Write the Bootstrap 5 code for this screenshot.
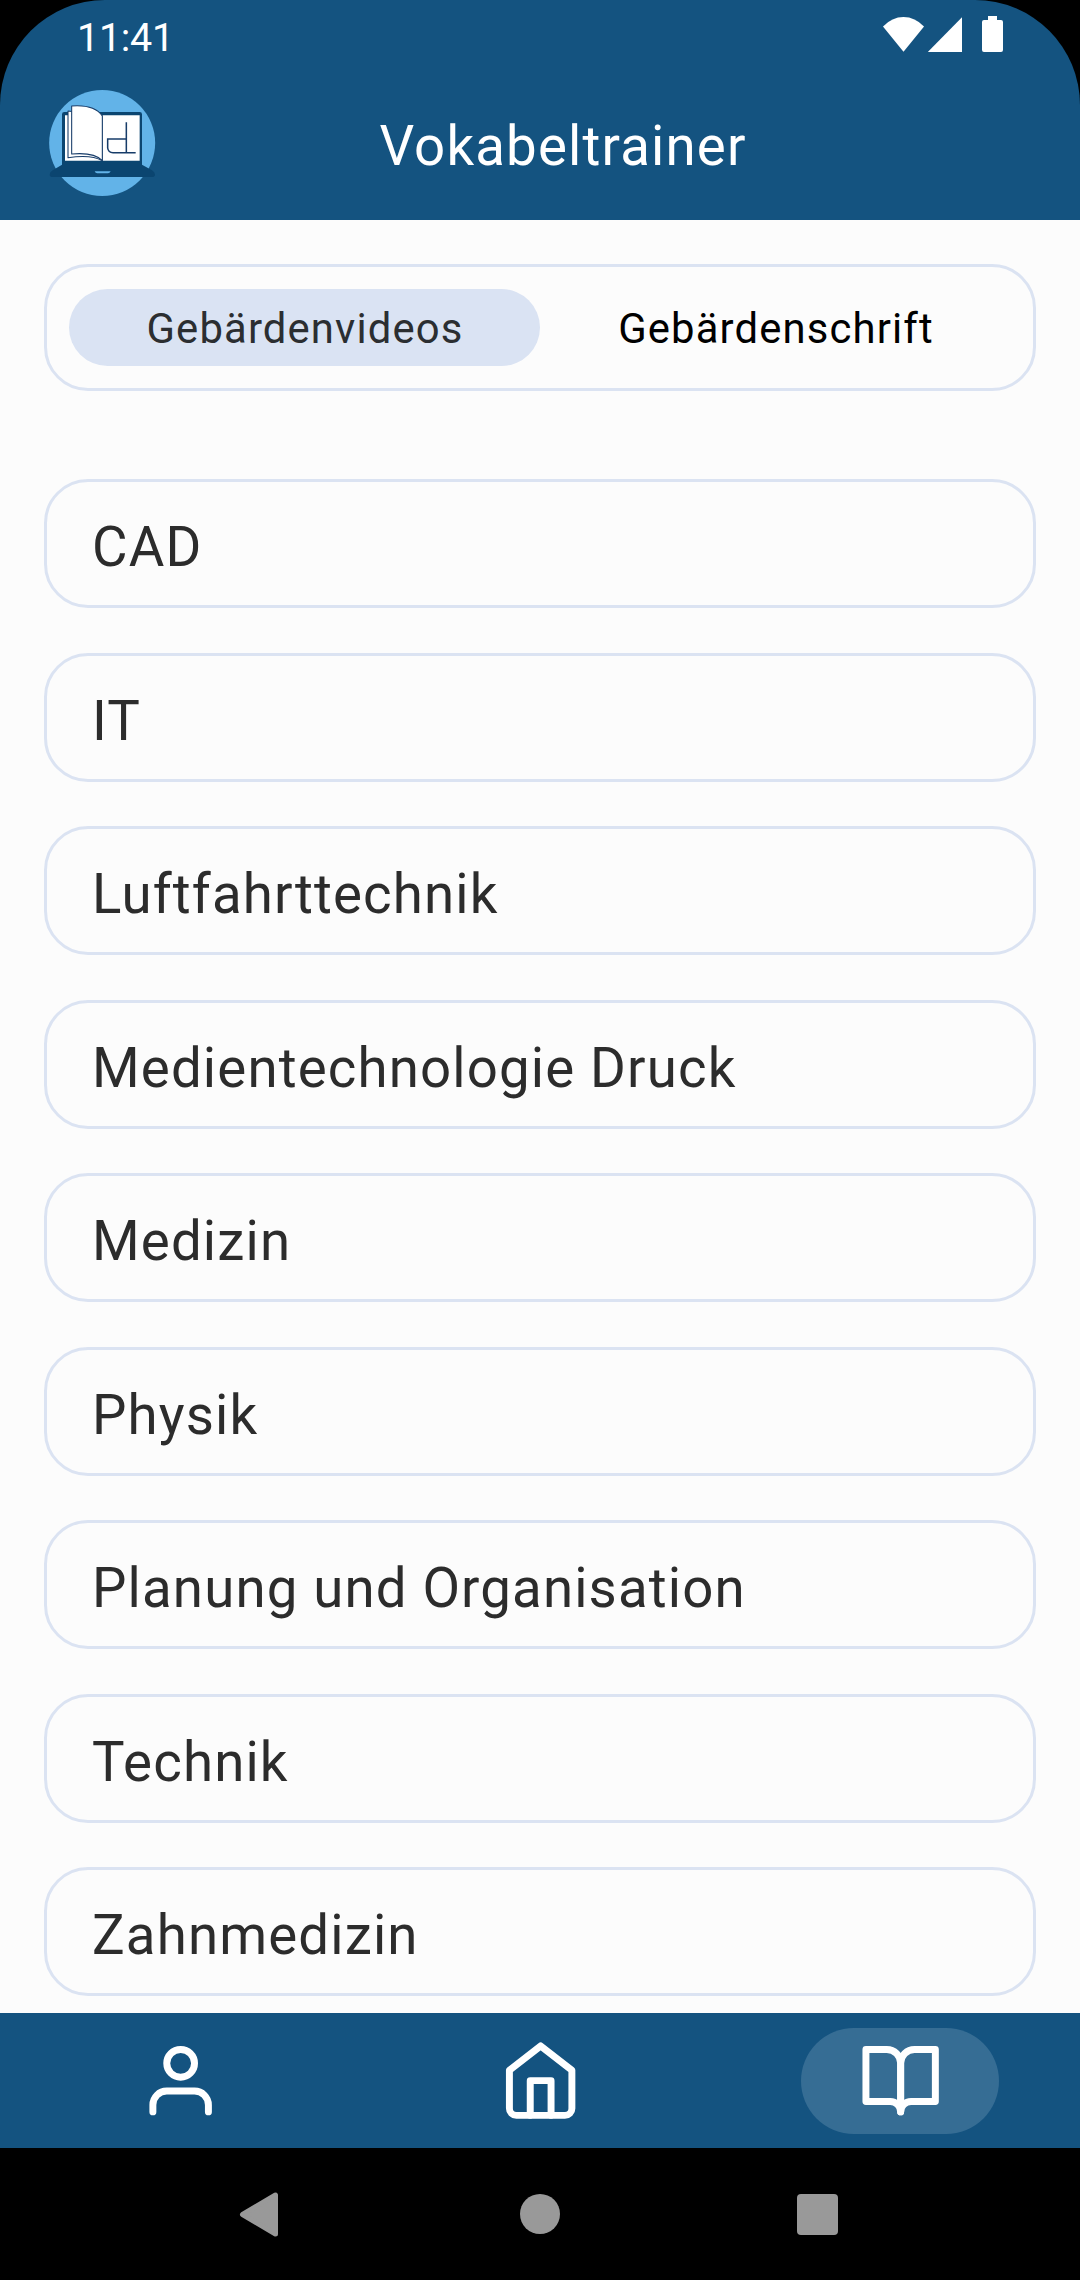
<!DOCTYPE html>
<html lang="de">
<head>
<meta charset="utf-8">
<meta name="viewport" content="width=device-width, initial-scale=1">
<title>Vokabeltrainer</title>
<link href="https://cdn.jsdelivr.net/npm/bootstrap@5.3.0/dist/css/bootstrap.min.css" rel="stylesheet">
<style>
  body { background: #000; font-family: Roboto, "Noto Sans", sans-serif; }
  .phone { width: 1080px; height: 2280px; }
  .app-head { height: 220px; background: #145380; border-radius: 105px 105px 0 0; }
  .status { height: 70px; padding: 0 77px 0 77px; }
  .clock { font-size: 39.5px; line-height: 47px; padding-top: 14px; letter-spacing: -.3px; }
  .status-icons { margin-top: 15px; }
  .app-bar { height: 150px; padding-left: 48px; }
  .logo { width: 108px; height: 108px; margin-top: 18.7px; }
  .app-title { font-size: 54.6px; letter-spacing: 1.17px; line-height: 64px; font-weight: 400; padding-top: 44px; margin-right: 110px; }
  .content { background: #fcfcfc; padding: 44px 44px 0; }
  .segment { height: 127px; padding: 22px; border: 3px solid #dbe3f2; border-radius: 44px; }
  .segment .nav-link { height: 77px; padding: 2px 0 0 1px; border-radius: 39px; color: #000; font-size: 41.8px; line-height: 76px; letter-spacing: 1.15px; }
  .segment .nav-link.active { background: #dae3f3; color: #2b2e31; }
  .topics { margin-top: 88px; gap: 44.5px; }
  .topics .list-group-item { height: 129px; border: 3px solid #dbe3f2; border-radius: 44px; background: transparent; color: #2c2c2c; padding: 32px 45px 0; font-size: 54.6px; line-height: 66px; letter-spacing: 1.15px; }
  .tabs { height: 135px; background: #145380; }
  .tabs a { width: 198px; height: 106px; border-radius: 53px; color: #fff; padding-left: 1px; }
  .tabs a.active { background: #366d94; }
  .tabs svg { width: 83.3px; height: 83.3px; fill: none; stroke: currentColor; stroke-width: 2; stroke-linecap: round; stroke-linejoin: round; }
  .sysbar { height: 132px; }
</style>
</head>
<body>
<div class="phone d-flex flex-column overflow-hidden">
  <header class="app-head text-white flex-shrink-0">
    <div class="status d-flex justify-content-between align-items-start">
      <span class="clock">11:41</span>
      <svg class="status-icons" width="122" height="38" viewBox="881 15 122 38" fill="#fff">
        <path d="M883 26.5Q892 17 903.5 17T924 26.5L903.5 51.7Z"/>
        <path d="M962 17.3V52H927.8Z"/>
        <path d="M988 16h9v4h4q2 0 2 2v28q0 2-2 2h-17q-2 0-2-2V22q0-2 2-2h4z"/>
      </svg>
    </div>
    <div class="app-bar d-flex align-items-start">
      <svg class="logo flex-shrink-0" viewBox="54 41 324 324">
        <circle cx="216.500" cy="203" r="159" fill="#62b3e8"/>
        <path d="M96 268V117q0-7 7-7h226q7 0 7 7v151l30 17q9 5 9 13 0 7-10 7H69q-10 0-10-7 0-8 9-13z" fill="#0b4570"/>
        <path d="M105 120h224v136H105z" fill="#fff"/>
        <g fill="#fff" stroke="#173c69" stroke-width="3.2" stroke-linejoin="round">
          <path d="M114 107V247Q185 237 216 256V120Z"/>
          <path d="M125 92V236Q193 230 217 256V122Q193 87 125 92Z"/>
        </g>
        <path d="M289 141V232M289 191H233V218Q235 232 249 232H317" fill="none" stroke="#173c69" stroke-width="4.600"/>
        <path d="M194 288h48q-3 6-8 6h-32q-6 0-8-6z" fill="#62b3e8"/>
      </svg>
      <h1 class="app-title flex-grow-1 text-center mb-0">Vokabeltrainer</h1>
    </div>
  </header>

  <main class="content flex-grow-1 overflow-hidden">
    <nav class="segment nav nav-pills nav-fill flex-nowrap">
      <a class="nav-link active w-50" href="#">Gebärdenvideos</a>
      <a class="nav-link w-50" href="#">Gebärdenschrift</a>
    </nav>
    <div class="topics list-group">
      <a class="list-group-item" href="#">CAD</a>
      <a class="list-group-item" href="#">IT</a>
      <a class="list-group-item" href="#">Luftfahrttechnik</a>
      <a class="list-group-item" href="#">Medientechnologie Druck</a>
      <a class="list-group-item" href="#">Medizin</a>
      <a class="list-group-item" href="#">Physik</a>
      <a class="list-group-item" href="#">Planung und Organisation</a>
      <a class="list-group-item" href="#">Technik</a>
      <a class="list-group-item" href="#">Zahnmedizin</a>
    </div>
  </main>

  <nav class="tabs d-flex justify-content-around align-items-center flex-shrink-0">
    <a class="d-flex justify-content-center align-items-center" href="#" aria-label="Profil">
      <svg viewBox="0 0 24 24"><path d="M20 21v-2a4 4 0 0 0-4-4H8a4 4 0 0 0-4 4v2"/><circle cx="12" cy="7" r="4"/></svg>
    </a>
    <a class="d-flex justify-content-center align-items-center" href="#" aria-label="Start">
      <svg viewBox="0 0 24 24"><path d="M3 9l9-7 9 7v11a2 2 0 0 1-2 2H5a2 2 0 0 1-2-2z"/><path d="M9 22V12h6v10"/></svg>
    </a>
    <a class="active d-flex justify-content-center align-items-center" href="#" aria-label="Vokabeln">
      <svg viewBox="0 0 24 24"><path d="M2 3h6a4 4 0 0 1 4 4v14a3 3 0 0 0-3-3H2z"/><path d="M22 3h-6a4 4 0 0 0-4 4v14a3 3 0 0 1 3-3h7z"/></svg>
    </a>
  </nav>

  <div class="sysbar bg-black d-flex justify-content-center flex-shrink-0">
    <svg width="600" height="132" viewBox="240 2148 600 132" overflow="visible" fill="#999">
      <path d="M242.500 2214.500L275.500 2195V2234Z" stroke="#999" stroke-width="5" stroke-linejoin="round"/>
      <circle cx="540" cy="2214" r="20"/>
      <rect x="797" y="2194" width="41" height="41" rx="4"/>
    </svg>
  </div>
</div>
<script src="https://cdn.jsdelivr.net/npm/bootstrap@5.3.0/dist/js/bootstrap.bundle.min.js"></script>
</body>
</html>
